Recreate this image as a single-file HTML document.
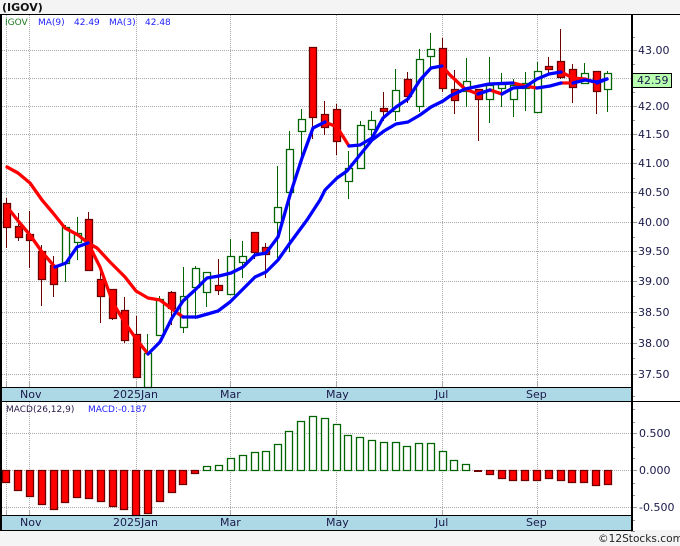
<!DOCTYPE html>
<html><head><meta charset="utf-8"><style>
html,body{margin:0;padding:0;background:#f4f4f4;width:680px;height:546px;overflow:hidden}
svg{display:block}
text{font-family:"DejaVu Sans",sans-serif;font-size:11px;fill:#1a1a4a}
.l{font-size:9px;fill:#2222ff}
</style></head><body>
<svg width="680" height="546" viewBox="0 0 680 546" xmlns="http://www.w3.org/2000/svg">
<rect width="680" height="546" fill="#f4f4f4"/>
<rect x="0" y="14" width="680" height="516" fill="#fff"/>
<rect x="1" y="388" width="631" height="13" fill="#add8e6"/>
<rect x="1" y="516" width="631" height="14" fill="#add8e6"/>
<!-- grid -->
<path d="M2 50.5H632M2 78.5H632M2 106.5H632M2 134.5H632M2 163.5H632M2 192.5H632M2 222.5H632M2 251.5H632M2 281.5H632M2 312.5H632M2 343.5H632M2 374.5H632M2 433.5H632M2 470.5H632M2 507.5H632M6.5 15V387M29.5 15V387M136.5 15V387M230.5 15V387M336.5 15V387M442.5 15V387M537.5 15V387M6.5 402V515M29.5 402V515M136.5 402V515M230.5 402V515M336.5 402V515M442.5 402V515M537.5 402V515" stroke="#aaa" stroke-width="1" stroke-dasharray="1 1" fill="none"/>
<path d="M6.5 382V387M29.5 382V387M136.5 382V387M230.5 382V387M336.5 382V387M442.5 382V387M537.5 382V387M6.5 510V515M29.5 510V515M136.5 510V515M230.5 510V515M336.5 510V515M442.5 510V515M537.5 510V515" stroke="#aaa" fill="none"/>
<!-- wicks -->
<path d="M6.5 198V248M18.5 213V241M29.5 211V268M41.5 245V306M53.5 256V297M88.5 212V271M100.5 265V323M112.5 289V320M124.5 297V343M136.5 316V377M171.5 291V325M218.5 259V295M254.5 232V259M265.5 243V278M312.5 47V139M324.5 101V135M336.5 104V155M383.5 92V121M407.5 72V103M442.5 38V92M454.5 70V114M478.5 89V141M548.5 57V73M560.5 29V79M572.5 64V103M596.5 71V114" stroke="#6b0000" fill="none"/>
<path d="M65.5 225V282M77.5 217V260M147.5 334V387M159.5 296V335M183.5 267V333M195.5 266V319M206.5 272V307M230.5 239V294M242.5 241V278M277.5 166V258M289.5 131V252M301.5 109V160M348.5 151V199M360.5 121V169M371.5 111V138M395.5 69V121M419.5 49V112M430.5 33V68M466.5 58V107M489.5 57V123M501.5 73V107M513.5 79V117M525.5 72V111M537.5 62V113M584.5 63V83M607.5 71V112" stroke="#006400" fill="none"/>
<!-- bodies -->
<path d="M3.5 203.5h7v24h-7zM15.5 226.5h7v11h-7zM26.5 234.5h7v6h-7zM38.5 251.5h7v28h-7zM50.5 265.5h7v19h-7zM85.5 219.5h7v51h-7zM97.5 279.5h7v17h-7zM109.5 289.5h7v29h-7zM121.5 310.5h7v30h-7zM133.5 334.5h7v43h-7zM168.5 292.5h7v16h-7zM215.5 285.5h7v5h-7zM251.5 232.5h7v20h-7zM262.5 247.5h7v7h-7zM309.5 47.5h7v70h-7zM321.5 114.5h7v13h-7zM333.5 109.5h7v32h-7zM380.5 108.5h7v3h-7zM404.5 79.5h7v17h-7zM439.5 48.5h7v40h-7zM451.5 89.5h7v11h-7zM475.5 89.5h7v10h-7zM545.5 66.5h7v3h-7zM557.5 61.5h7v16h-7zM569.5 69.5h7v18h-7zM593.5 71.5h7v20h-7z" fill="#ff0000" stroke="#6b0000" stroke-width="1.3"/>
<path d="M62.5 227.5h7v36h-7zM74.5 233.5h7v9h-7zM144.5 353.5h7v34h-7zM156.5 299.5h7v36h-7zM180.5 296.5h7v31h-7zM192.5 268.5h7v19h-7zM203.5 272.5h7v20h-7zM227.5 256.5h7v38h-7zM239.5 256.5h7v6h-7zM274.5 207.5h7v15h-7zM286.5 149.5h7v43h-7zM298.5 119.5h7v12h-7zM345.5 168.5h7v13h-7zM357.5 125.5h7v43h-7zM368.5 120.5h7v9h-7zM392.5 90.5h7v21h-7zM416.5 59.5h7v47h-7zM427.5 49.5h7v7h-7zM463.5 81.5h7v10h-7zM486.5 85.5h7v14h-7zM498.5 84.5h7v4h-7zM510.5 85.5h7v14h-7zM522.5 83.5h7v5h-7zM534.5 71.5h7v41h-7zM581.5 73.5h7v10h-7zM604.5 73.5h7v16h-7z" fill="#fff" stroke="#006400" stroke-width="1.3"/>
<!-- moving averages -->
<g fill="none" stroke-width="3.3" stroke-linejoin="round" stroke-linecap="round">
<path stroke="#ff0000" d="M7 167L18 173L30 183L42 200L53 213L65 228L78 235L88 243L97 248L110 262L125 277L136 291L148 298L160 300L172 309L183 317M513 83L525 86L537 88M561 83L573 83"/>
<path stroke="#ff0000" d="M8 208L19 222L30 235L42 252L55 267M88 243L100 267L113 303L125 323L137 340L148 354M325 122L337 127L349 146M442 66L450 75L465 89L478 94M490 90L502 94M561 72L573 78L585 79L597 83"/>
<path stroke="#0000ff" d="M183 317L197 317L218 311L230 302L255 277L266 272L278 260L290 243L307 220L320 200L325 190L337 178L347 171L372 140L384 131L396 124L408 122L420 115L431 107L443 101L450 96L465 89L489 84L513 83M537 88L550 86L561 83M573 83L585 80L597 82L607 79"/>
<path stroke="#0000ff" d="M55 267L66 263L77 247L88 243M148 354L160 342L172 318L183 301L195 290L207 278L219 276L231 273L243 267L255 255L266 253L278 237L290 195L302 158L313 128L325 122M349 146L360 145L372 138L383 118L396 107L408 99L420 80L431 68L442 66M478 94L490 90M502 94L513 88L525 87L537 79L549 74L561 72M597 83L607 79"/>
</g>
<!-- MACD bars -->
<path d="M2.5 470.5h7v12h-7zM14.5 470.5h7v20h-7zM26.5 470.5h7v26h-7zM38.5 470.5h7v34h-7zM50.5 470.5h7v39h-7zM61.5 470.5h7v32h-7zM73.5 470.5h7v27h-7zM85.5 470.5h7v28h-7zM97.5 470.5h7v31h-7zM109.5 470.5h7v36h-7zM120.5 470.5h7v39h-7zM132.5 470.5h7v45h-7zM144.5 470.5h7v43h-7zM156.5 470.5h7v31h-7zM168.5 470.5h7v22h-7zM179.5 470.5h7v14h-7zM191.5 470.5h7v3h-7zM486.5 470.5h7v4h-7zM498.5 470.5h7v8h-7zM509.5 470.5h7v10h-7zM521.5 470.5h7v10h-7zM533.5 470.5h7v10h-7zM545.5 470.5h7v8h-7zM557.5 470.5h7v10h-7zM568.5 470.5h7v12h-7zM580.5 470.5h7v12h-7zM592.5 470.5h7v15h-7zM604.5 470.5h7v14h-7z" fill="#ff0000" stroke="#6b0000" stroke-width="1.3"/>
<path d="M474 471h8" stroke="#6b0000" stroke-width="2"/>
<path d="M203.5 466.5h7v4h-7zM215.5 465.5h7v5h-7zM227.5 458.5h7v12h-7zM239.5 455.5h7v15h-7zM251.5 452.5h7v18h-7zM262.5 451.5h7v19h-7zM274.5 444.5h7v26h-7zM285.5 431.5h7v39h-7zM297.5 421.5h7v49h-7zM309.5 416.5h7v54h-7zM321.5 418.5h7v52h-7zM333.5 424.5h7v46h-7zM344.5 435.5h7v35h-7zM356.5 437.5h7v33h-7zM368.5 440.5h7v30h-7zM380.5 442.5h7v28h-7zM392.5 442.5h7v28h-7zM403.5 446.5h7v24h-7zM415.5 443.5h7v27h-7zM427.5 443.5h7v27h-7zM439.5 451.5h7v19h-7zM450.5 460.5h7v10h-7zM462.5 464.5h7v6h-7z" fill="#fff" stroke="#006400" stroke-width="1.3"/>
<!-- frame -->
<path d="M0 14.5H680" stroke="#000" fill="none"/>
<path d="M0 387.5H632M0 401.5H680M0 515.5H632M0 530.5H632" stroke="#000" fill="none"/>
<rect x="0" y="14" width="2" height="517" fill="#000"/>
<rect x="631" y="14" width="2" height="517" fill="#000"/>
<!-- right ticks -->
<path d="M633 37.5H635M633 64.5H635M633 92.5H635M633 120.5H635M633 149.5H635M633 178.5H635M633 207.5H635M633 237.5H635M633 266.5H635M633 296.5H635M633 327.5H635M633 358.5H635M633 396.5H635M633 409.5H635M633 422.5H635M633 447.5H635M633 458.5H635M633 483.5H635M633 495.5H635M633 520.5H635M631 531.5H635" stroke="#999" fill="none"/>
<path d="M633 50.5H637M633 78.5H637M633 106.5H637M633 134.5H637M633 163.5H637M633 192.5H637M633 222.5H637M633 251.5H637M633 281.5H637M633 312.5H637M633 343.5H637M633 374.5H637M633 433.5H637M633 470.5H637M633 507.5H637" stroke="#999" fill="none"/>
<!-- labels -->
<text x="2" y="11" style="font-weight:bold;fill:#111">(IGOV)</text>
<text x="5" y="25" class="l" style="fill:#1f7a1f">IGOV</text>
<text x="38" y="25" class="l">MA(9)</text><text x="74" y="25" class="l">42.49</text>
<text x="109" y="25" class="l">MA(3)</text><text x="145" y="25" class="l">42.48</text>
<text x="6" y="412" class="l" style="fill:#2a1a4a">MACD(26,12,9)</text>
<text x="88" y="412" class="l">MACD:-0.187</text>
<g>
<text x="638" y="54">43.00</text><text x="638" y="110">42.00</text><text x="638" y="138">41.50</text><text x="638" y="167">41.00</text><text x="638" y="196">40.50</text><text x="638" y="226">40.00</text><text x="638" y="255">39.50</text><text x="638" y="285">39.00</text><text x="638" y="316">38.50</text><text x="638" y="347">38.00</text><text x="638" y="378">37.50</text>
<text x="639" y="437">0.500</text><text x="639" y="474">0.000</text><text x="639" y="511">-0.500</text>
</g>
<rect x="632.5" y="73.5" width="39" height="14" fill="#b8ffb0" stroke="#000"/>
<text x="637" y="84">42.59</text>
<text x="20" y="398">Nov</text><text x="113" y="398">2025Jan</text><text x="220" y="398">Mar</text><text x="326" y="398">May</text><text x="435" y="398">Jul</text><text x="526" y="398">Sep</text>
<text x="20" y="526">Nov</text><text x="113" y="526">2025Jan</text><text x="220" y="526">Mar</text><text x="326" y="526">May</text><text x="435" y="526">Jul</text><text x="526" y="526">Sep</text>
<text x="598" y="542" style="fill:#222;font-size:10.6px">©12Stocks.com</text>
</svg>
</body></html>
